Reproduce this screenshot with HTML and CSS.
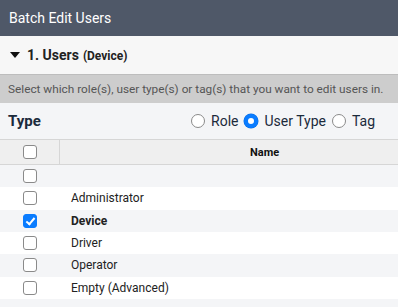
FILE: index.html
```html
<!DOCTYPE html>
<html lang="en">
<head>
    <meta charset="UTF-8">
    <meta name="viewport" content="width=device-width, initial-scale=1.0">
    <title>Batch Edit Users</title>
    <link rel="stylesheet" href="styles.css">
</head>
<body>
    <div class="titlebar">Batch Edit Users</div>
    <div class="section-head">
        <span class="caret"></span>
        <span class="step">1. Users</span>
        <span class="step-sub">(Device)</span>
    </div>
    <div class="hint">Select which role(s), user type(s) or tag(s) that you want to edit users in.</div>
    <div class="type-row">
        <span class="type-label">Type</span>
        <div class="radios">
            <label class="radio"><span class="dot"></span>Role</label>
            <label class="radio"><span class="dot on"></span>User Type</label>
            <label class="radio"><span class="dot"></span>Tag</label>
        </div>
    </div>
    <div class="grid">
        <div class="grid-head">
            <div class="cell-check"><span class="box"></span></div>
            <div class="cell-name">Name</div>
        </div>
        <div class="grid-row">
            <div class="cell-check"><span class="box"></span></div>
            <div class="cell-name"></div>
        </div>
        <div class="grid-row">
            <div class="cell-check"><span class="box"></span></div>
            <div class="cell-name">Administrator</div>
        </div>
        <div class="grid-row selected">
            <div class="cell-check"><span class="box checked"></span></div>
            <div class="cell-name">Device</div>
        </div>
        <div class="grid-row">
            <div class="cell-check"><span class="box"></span></div>
            <div class="cell-name">Driver</div>
        </div>
        <div class="grid-row">
            <div class="cell-check"><span class="box"></span></div>
            <div class="cell-name">Operator</div>
        </div>
        <div class="grid-row">
            <div class="cell-check"><span class="box"></span></div>
            <div class="cell-name">Empty (Advanced)</div>
        </div>
        <div class="grid-row"></div>
    </div>
</body>
</html>
```

FILE: styles.css
```css
body {
    margin: 0;
    font-family: Roboto, "Noto Sans", sans-serif;
    background-color: #fff;
    overflow: hidden;
}
.titlebar {
    height: 36px;
    padding-left: 9px;
    display: flex;
    align-items: center;
    background-color: #4f5868;
    color: #fff;
    font-size: 14px;
}
.section-head {
    height: 38px;
    padding-left: 10px;
    display: flex;
    align-items: center;
    background-color: #f7f7f7;
    color: #222;
    font-weight: bold;
    border-bottom: 1px solid #bdbdbd;
}
.caret {
    width: 0;
    height: 0;
    border-left: 5px solid transparent;
    border-right: 5px solid transparent;
    border-top: 6px solid #111;
    margin-right: 7px;
}
.step {
    font-size: 14px;
}
.step-sub {
    font-size: 12px;
    margin-left: 4px;
    margin-top: 2px;
}
.hint {
    height: 28px;
    padding-left: 8px;
    display: flex;
    align-items: center;
    background-color: #cdcdcd;
    color: #555;
    font-size: 11.8px;
    white-space: nowrap;
}
.type-row {
    height: 36px;
    padding: 0 23px 0 8px;
    display: flex;
    align-items: center;
    justify-content: space-between;
    background-color: #f4f5f7;
    color: #1b2a3b;
    font-size: 15px;
}
.type-label {
    font-weight: bold;
}
.radios {
    display: flex;
    gap: 6px;
    font-size: 14px;
}
.radio {
    display: flex;
    align-items: center;
    gap: 6px;
}
.dot {
    width: 12px;
    height: 12px;
    border: 1px solid #8a8a8a;
    border-radius: 50%;
    background-color: #fff;
    box-sizing: content-box;
}
.dot.on {
    width: 6px;
    height: 6px;
    border: 4px solid #0a7cff;
    box-shadow: 0 0 0 0.5px #0a6ee0;
}
.grid-head {
    height: 24px;
    display: flex;
    background-color: #efefef;
    border-top: 1px solid #d6d6d6;
    border-bottom: 1px solid #d6d6d6;
}
.grid-head .cell-check {
    border-right: 1px solid #d6d6d6;
}
.grid-head .cell-name {
    padding-left: 190px;
    font-size: 11px;
    font-weight: bold;
    color: #111;
}
.grid-row {
    height: 22.33px;
    display: flex;
    font-size: 12px;
    color: #222;
}
.grid-row:nth-child(even) {
    background-color: #f4f5f7;
}
.grid-row.selected .cell-name {
    font-weight: bold;
}
.cell-check {
    width: 59px;
    display: flex;
    align-items: center;
    justify-content: center;
}
.cell-name {
    padding-left: 12px;
    display: flex;
    align-items: center;
}
.box {
    width: 12px;
    height: 12px;
    border: 1px solid #8a8a8a;
    border-radius: 3px;
    background-color: #fff;
    box-sizing: content-box;
    position: relative;
}
.box.checked {
    background-color: #0a7cff;
    border-color: #0a7cff;
}
.box.checked::after {
    content: "";
    position: absolute;
    left: 4px;
    top: 1px;
    width: 3px;
    height: 7px;
    border-right: 2px solid #fff;
    border-bottom: 2px solid #fff;
    transform: rotate(40deg);
}
```
